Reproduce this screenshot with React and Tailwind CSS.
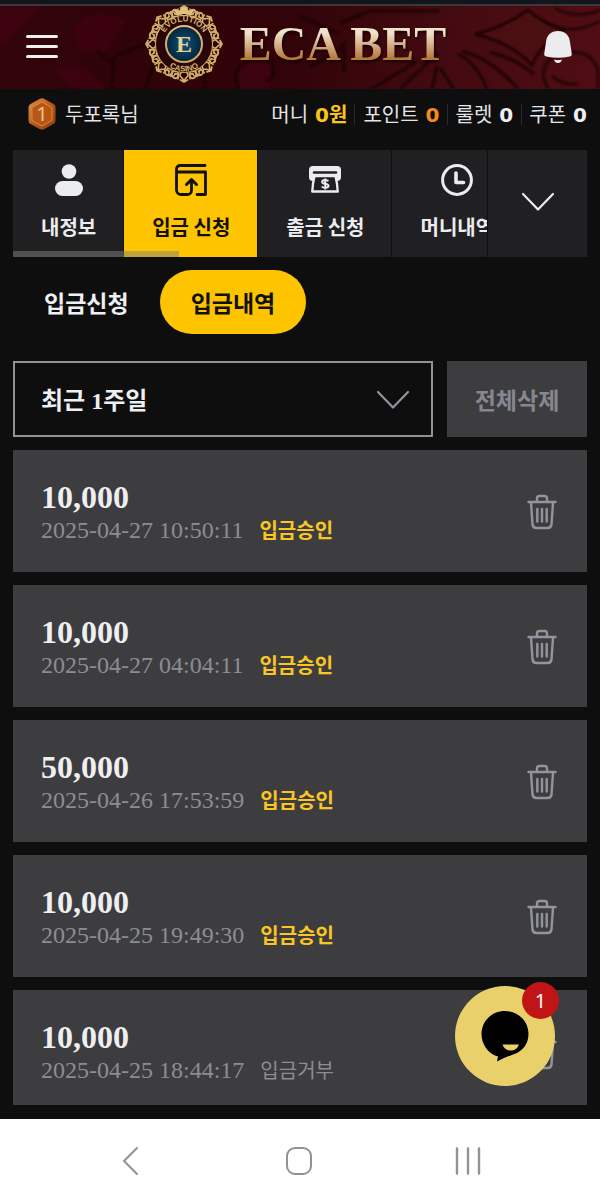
import clsx from 'clsx';

const balances = [
  { label: '머니', value: '0', unit: '원', color: 'text-[#fcc419]' },
  { label: '포인트', value: '0', color: 'text-[#f58a1f]' },
  { label: '룰렛', value: '0', color: 'text-[#eeeff1]' },
  { label: '쿠폰', value: '0', color: 'text-[#eeeff1]' },
];

const deposits = [
  { id: 1, amount: '10,000', date: '2025-04-27 10:50:11', status: '입금승인', approved: true },
  { id: 2, amount: '10,000', date: '2025-04-27 04:04:11', status: '입금승인', approved: true },
  { id: 3, amount: '50,000', date: '2025-04-26 17:53:59', status: '입금승인', approved: true },
  { id: 4, amount: '10,000', date: '2025-04-25 19:49:30', status: '입금승인', approved: true },
  { id: 5, amount: '10,000', date: '2025-04-25 18:44:17', status: '입금거부', approved: false },
];

const UserIcon = () => (
  <svg viewBox="0 0 32 32" className="h-8 w-8" fill="currentColor" aria-hidden="true">
    <circle cx="16" cy="7.5" r="7.3" />
    <rect x="2" y="17" width="28" height="15" rx="7.5" />
  </svg>
);

const DepositIcon = () => (
  <svg viewBox="0 0 32 32" className="h-8 w-8" fill="none" stroke="currentColor" strokeWidth="2.8" strokeLinecap="round" strokeLinejoin="round" aria-hidden="true">
    <path d="M30 1.5H5A3.5 3.5 0 0 0 1.5 5v21A4.5 4.5 0 0 0 6 30.5h6.5a4 4 0 0 0 4-4V17" />
    <path d="M2 8h28.5v22.5H22" />
    <path d="M11.5 20.5l5-4.8 5 4.8" strokeWidth="3" />
  </svg>
);

const WithdrawIcon = () => (
  <svg viewBox="0 0 32 32" className="h-8 w-8" aria-hidden="true">
    <path d="M4 2h24a4 4 0 0 1 4 4v7a4 4 0 0 1-4 4H4a4 4 0 0 1-4-4V6a4 4 0 0 1 4-4z" fill="currentColor" />
    <path d="M5 8.500h22" stroke="#202022" strokeWidth="2.400" strokeLinecap="round" />
    <path d="M5.500 12h21q1.800 7 2.200 15.500H3.300Q3.700 19 5.500 12z" fill="#202022" stroke="currentColor" strokeWidth="2.400" strokeLinejoin="round" />
    <path d="M19.300 17.300c-.6-.9-1.700-1.300-3.200-1.300-1.800 0-3 .7-3 1.900 0 2.600 6.400 1.200 6.400 3.900 0 1.300-1.400 2-3.300 2-1.500 0-2.800-.5-3.400-1.300M16.200 14.500V25.500" fill="none" stroke="currentColor" strokeWidth="2" />
  </svg>
);

const ClockIcon = () => (
  <svg viewBox="0 0 32 32" className="h-8 w-8" fill="none" stroke="currentColor" aria-hidden="true">
    <circle cx="16" cy="16" r="14.4" strokeWidth="3" />
    <path d="M15 9v9.500h7.500" strokeWidth="3.6" strokeLinecap="round" strokeLinejoin="round" />
  </svg>
);

const Chevron = ({ className }) => (
  <svg viewBox="0 0 34 20" className={clsx('h-5 w-[34px]', className)} fill="none" stroke="currentColor" strokeWidth="2.200" strokeLinecap="round" strokeLinejoin="round" aria-hidden="true">
    <path d="M2 2l15 15.500L32 2" />
  </svg>
);

const TrashIcon = () => (
  <svg viewBox="0 0 30 36" className="h-9 w-[30px]" fill="none" stroke="currentColor" strokeWidth="2.400" strokeLinecap="round" strokeLinejoin="round" aria-hidden="true">
    <path d="M1.500 8h27M10 7.500V4.500A2.500 2.500 0 0 1 12.500 2h5A2.500 2.500 0 0 1 20 4.500v3" />
    <path d="M4 8.500l1.500 22a4 4 0 0 0 4 3.500h11a4 4 0 0 0 4-3.500L26 8.500M10.300 15v12.500M15 15v12.500M19.700 15v12.500" />
  </svg>
);

const tabs = [
  { label: '내정보', icon: UserIcon },
  { label: '입금 신청', icon: DepositIcon, active: true },
  { label: '출금 신청', icon: WithdrawIcon },
  { label: '머니내역', icon: ClockIcon },
];

const lobes = [0, 45, 90, 135, 180, 225, 270, 315];

const Crest = () => (
  <svg viewBox="0 0 80 80" className="h-20 w-20 shrink-0" fill="none" aria-hidden="true">
    <defs>
      <radialGradient id="crest-blue">
        <stop offset="0" stopColor="#075784" />
        <stop offset="1" stopColor="#062338" />
      </radialGradient>
      <linearGradient id="crest-gold" x1="0" y1="0" x2="0" y2="80" gradientUnits="userSpaceOnUse">
        <stop offset="0" stopColor="#e6cb84" />
        <stop offset="1" stopColor="#c39a58" />
      </linearGradient>
      <path id="crest-top" d="M17.500 40a22.500 22.500 0 0 1 45 0" />
      <path id="crest-bottom" d="M12.500 40a27.500 27.500 0 0 0 55 0" />
    </defs>
    {lobes.map((angle) => (
      <g key={angle} transform={`rotate(${angle} 40 40)`} stroke="#cfae69" strokeLinecap="round">
        <path d="M29 13c-3-4 0-8 3.500-7 3 1 2 5-1 4M51 13c3-4 0-8-3.500-7-3 1-2 5 1 4" strokeWidth="1.900" />
        <path d="M40 12c-4 0-5-3-3-5s3-2.500 3-5c0 2.500 1 3 3 5s1 5-3 5zM36.500 4l3.500-2 3.500 2" strokeWidth="1.700" />
        <path d="M29 13.500c4-3 6 .5 11-1.500 5 2 7-1.500 11 1.500" strokeWidth="1.600" />
        <path d="M25.500 12.500c-2-2 0-5 2-4.500M54.500 12.500c2-2 0-5-2-4.500M34 5c1 2 1 4 0 7M46 5c-1 2-1 4 0 7" strokeWidth="1.400" />
      </g>
    ))}
    <circle cx="40" cy="40" r="28.500" fill="#2a050a" stroke="url(#crest-gold)" strokeWidth=".9" />
    <circle cx="40" cy="40" r="18" fill="url(#crest-blue)" stroke="url(#crest-gold)" strokeWidth="2" />
    <path d="M33 11l-4-6 6 2 2-3 3-1 3 1 2 3 6-2-4 6q-7-2-14 0z" fill="#e0c27a" />
    <g fill="#d7b56c" fontFamily="Liberation Sans" fontWeight="700" fontSize="8">
      <text textAnchor="middle"><textPath href="#crest-top" startOffset="50%">EVOLUTION</textPath></text>
      <text textAnchor="middle"><textPath href="#crest-bottom" startOffset="50%">CASINO</textPath></text>
    </g>
    <text x="40" y="48" textAnchor="middle" fill="#edd089" fontFamily="Liberation Serif" fontWeight="700" fontSize="24">E</text>
  </svg>
);

const HeaderPattern = () => (
  <svg viewBox="0 0 600 83" preserveAspectRatio="xMidYMid slice" className="absolute inset-0 h-full w-full" fill="none" aria-hidden="true">
    <defs>
      <linearGradient id="header-red">
        <stop offset="0" stopColor="#32050b" />
        <stop offset=".2" stopColor="#300309" />
        <stop offset=".5" stopColor="#320409" />
        <stop offset=".75" stopColor="#430b11" />
        <stop offset="1" stopColor="#500d13" />
      </linearGradient>
      <filter id="soft"><feGaussianBlur stdDeviation="1" /></filter>
    </defs>
    <rect width="600" height="83" fill="url(#header-red)" />
    <g filter="url(#soft)">
      <path d="M0 0h45L0 42zM75 20q20-20 50-5l-20 32q-36 0-30-27zM55 60q30-5 50 23H80q-20-5-25-23zM240 55q20-12 30 5v23h-30z" fill="#46070e" opacity=".6" />
      <path d="M96 44l18 14-2 25M112 60q0-12 14-14l25-10M145 83l10-28M205 83V58M240 83q-12-15 6-27t26 2q6 12-6 17" stroke="#170104" strokeWidth="3" opacity=".75" />
      <path d="M300 10l38 17M340 17l30-12 70 0M310 60q20-6 34-22v28M372 83l45-28M400 83l38-36M437 60l-5 23M440 62l14 21" stroke="#170205" strokeWidth="3" opacity=".75" />
      <path d="M475 28q28-6 53-24 12 12 36 20-24 15-32 35-20-22-57-31z" fill="#4a0c13" stroke="#170205" strokeWidth="3" opacity=".8" />
      <path d="M458 48q18 8 29 35M462 45q30 8 56 38M490 46q24 6 44 22" stroke="#170205" strokeWidth="3" opacity=".8" />
      <path d="M548 83q-12-22 8-34 34-10 42 15v19M552 70q12 10 26 8M542 14q26 18 58 1M555 2q20 12 45 2" stroke="#170205" strokeWidth="3" opacity=".7" />
    </g>
  </svg>
);

const RankBadge = () => (
  <svg viewBox="0 0 30 34" className="h-[34px] w-[30px]" aria-hidden="true">
    <defs>
      <linearGradient id="bronze" x2="1" y2="1">
        <stop stopColor="#e39345" />
        <stop offset=".5" stopColor="#b85a19" />
        <stop offset="1" stopColor="#8d3b0d" />
      </linearGradient>
    </defs>
    <path d="M12.500 2q2.500-1.500 5 0l9 5q2 1 2 3.500v13q0 2.500-2 3.500l-9 5q-2.500 1.500-5 0l-9-5q-2-1-2-3.500v-13Q1.500 8 3.500 7z" fill="url(#bronze)" />
    <path d="M15 5l10 5.500v13L15 29 5 23.500v-13z" fill="#b65718" stroke="#df8a3e" strokeWidth="1" />
    <text x="15" y="24" textAnchor="middle" fontFamily="Noto Sans" fontSize="20" fill="#f6c486">1</text>
  </svg>
);

const Header = () => (
  <header className="shrink-0 border-t-4 border-[#13151b]">
    <div className="relative flex h-[85px] items-center justify-between border-t-2 border-[#39383d] px-[26px] pb-[2px]">
      <HeaderPattern />
      <button type="button" aria-label="메뉴" className="relative flex w-8 flex-col gap-[7px]">
        <span className="h-[3px] rounded bg-[#eeeeef]" />
        <span className="h-[3px] rounded bg-[#eeeeef]" />
        <span className="h-[3px] rounded bg-[#eeeeef]" />
      </button>
      <a href="#" className="relative flex items-center gap-4 pr-[10px] pb-[6px]">
        <Crest />
        <span className="bg-gradient-to-b from-[#f1e2cc] from-30% to-[#b57a3c] to-75% bg-clip-text font-['Liberation_Serif',serif] text-[48px] leading-[56px] font-bold whitespace-nowrap text-transparent drop-shadow-[1px_2px_1px_#160204]">
          ECA BET
        </span>
      </a>
      <button type="button" aria-label="알림" className="relative text-[#ececee]">
        <svg viewBox="0 0 32 34" className="h-[34px] w-8" fill="currentColor" aria-hidden="true">
          <path d="M16 1C9 1 4.500 5.500 4 12L2.200 24q-.2 2 2 2.500 11.800 2.500 23.600 0 2.200-.5 2-2.500L28 12C27.500 5.500 23 1 16 1zM12 29.500q4 1 8 0-1 3.500-4 3.500t-4-3.500z" />
        </svg>
      </button>
    </div>
  </header>
);

const AccountBar = () => (
  <div className="flex h-[50px] shrink-0 items-center justify-between pr-[13px] pl-[27px] text-[20px] text-[#e3e4e6]">
    <div className="flex items-center gap-2">
      <RankBadge />
      <span>두포록님</span>
    </div>
    <dl className="flex items-center divide-x divide-[#2b2b2d] leading-5">
      {balances.map((item) => (
        <div key={item.label} className="flex items-center gap-[7px] px-[7px] last:pr-0 nth-2:pl-2 nth-3:px-2">
          <dt>{item.label}</dt>
          <dd className={clsx('font-bold', item.color)}>
            <span className="font-['DejaVu_Sans',sans-serif]">{item.value}</span>
            {item.unit}
          </dd>
        </div>
      ))}
    </dl>
  </div>
);

const Tabs = () => (
  <nav className="mx-[13px] mt-[11px] flex h-[107px] shrink-0 gap-px">
    <div className="relative flex min-w-0 flex-1 overflow-hidden">
      {tabs.map((tab) => {
        const Icon = tab.icon;
        return (
          <a
            key={tab.label}
            href="#"
            className={clsx(
              'flex shrink-0 flex-col items-center gap-4 border-r border-[#0e0e0e] pt-[14px] pr-[27px] pl-7 text-[20px] leading-[30px] font-bold whitespace-nowrap',
              tab.active ? 'bg-[#ffc400] text-[#12100a]' : 'bg-[#202022] text-[#ebecee]'
            )}
          >
            <Icon />
            {tab.label}
          </a>
        );
      })}
      <div className="absolute bottom-0 left-0 h-[6px] w-[35%] bg-[#808080]/50" />
    </div>
    <button type="button" aria-label="더보기" className="flex w-[99px] items-center justify-center bg-[#202022] pb-1 text-[#ebecee]">
      <Chevron />
    </button>
  </nav>
);

const DepositRow = ({ item }) => (
  <li className="flex h-[122px] shrink-0 items-center justify-between bg-[#3d3d3f] pt-[2px] pr-[30px] pl-7">
    <div>
      <p className="font-['Liberation_Serif',serif] text-[32px] leading-9 font-bold text-[#eeeff0]">{item.amount}</p>
      <p className="flex items-center gap-4 text-[20px] leading-[30px]">
        <time className="font-['Liberation_Serif',serif] text-[24px] text-[#8b8d94]">{item.date}</time>
        <span className={item.approved ? 'font-bold text-[#f9c623]' : 'text-[#8b8d94]'}>{item.status}</span>
      </p>
    </div>
    <button type="button" aria-label="삭제" className="text-[#92959d]">
      <TrashIcon />
    </button>
  </li>
);

const ChatButton = () => (
  <button type="button" aria-label="채팅 상담" className="absolute right-[45px] bottom-[33px] h-[100px] w-[100px] rounded-full bg-[#e9d06b]">
    <svg viewBox="0 0 100 100" className="h-full w-full" aria-hidden="true">
      <path d="M50 25c13 0 23.500 10 23.500 23 0 10-6 17-14 20q-9 3-17.500 7.500l1-5C33 68 26.500 58 26.500 48c0-13 10.500-23 23.500-23z" fill="#000" />
      <path d="M47.500 58.500h16.500q-2 6-8.500 6-6 0-8-6z" fill="#e9d06b" />
    </svg>
    <span className="absolute -top-1 -right-1 flex h-[37px] w-[37px] items-center justify-center rounded-full bg-[#c01416] font-['Noto_Sans',sans-serif] text-[20px] text-white">
      1
    </span>
  </button>
);

const SystemBar = () => (
  <footer className="flex h-20 shrink-0 items-center justify-around bg-white pt-1 pr-12 pl-[46px] text-[#929292]">
    <button type="button" aria-label="뒤로">
      <svg viewBox="0 0 30 30" className="h-[30px] w-[30px]" fill="none" stroke="currentColor" strokeWidth="2" strokeLinecap="round" strokeLinejoin="round">
        <path d="M22 2L9 15l13 13" />
      </svg>
    </button>
    <button type="button" aria-label="홈">
      <svg viewBox="0 0 30 30" className="h-[30px] w-[30px]" fill="none" stroke="currentColor" strokeWidth="2">
        <rect x="3" y="2" width="24" height="26" rx="8" />
      </svg>
    </button>
    <button type="button" aria-label="최근 앱">
      <svg viewBox="0 0 30 30" className="h-[30px] w-[30px]" stroke="currentColor" strokeWidth="2.400" strokeLinecap="round">
        <path d="M4 2.500v25M15 2.500v25M26 2.500v25" />
      </svg>
    </button>
  </footer>
);

const App = () => (
  <div className="flex h-screen flex-col bg-[#0e0e0e] font-['Noto_Sans_CJK_KR',sans-serif]">
    <Header />
    <AccountBar />
    <Tabs />
    <main className="relative flex min-h-0 flex-1 flex-col px-[13px] pt-[13px] pb-[14px]">
      <div className="flex shrink-0 text-[23px] leading-8 font-bold">
        <button type="button" className="px-[31px] py-4 text-[#eeeff1]">입금신청</button>
        <button type="button" className="rounded-full bg-[#ffc400] px-[31px] py-4 text-[#12100a]">입금내역</button>
      </div>

      <div className="mt-[27px] flex h-[76px] shrink-0 gap-[14px]">
        <div className="relative flex-1">
          <select
            aria-label="조회 기간"
            className="h-full w-full appearance-none border-2 border-[#8f9299] bg-[#0e0e0e] px-[26px] pt-1 font-['Liberation_Serif','Noto_Sans_CJK_KR',serif] text-[24px] font-bold text-[#eeeff1]"
          >
            <option>최근 1주일</option>
          </select>
          <Chevron className="pointer-events-none absolute top-[29px] right-[23px] text-[#92959d]" />
        </div>
        <button type="button" className="w-[140px] bg-[#3d3d3f] text-[23px] font-bold text-[#85888f]">전체삭제</button>
      </div>

      <ul className="mt-[13px] flex min-h-0 flex-1 flex-col gap-[13px] overflow-hidden">
        {deposits.map((item) => (
          <DepositRow key={item.id} item={item} />
        ))}
      </ul>
      <ChatButton />
    </main>
    <SystemBar />
  </div>
);

export default App;
